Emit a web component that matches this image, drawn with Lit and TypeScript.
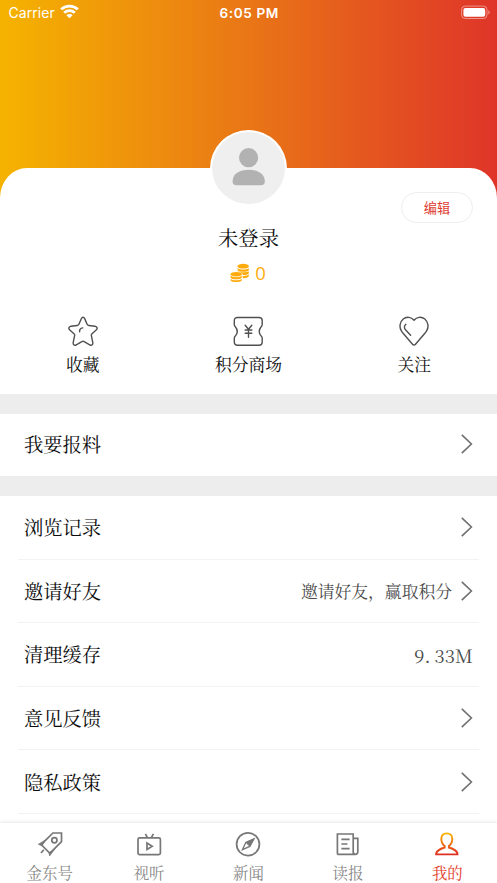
import { LitElement, html, css, svg } from "lit";
import { customElement } from "lit/decorators.js";
import { classMap } from "lit/directives/class-map.js";

const chevron = html`<svg class="chevron" width="12" height="20" viewBox="0 0 12 20"><path d="M.8 .8L10.4 10L.8 19.2" /></svg>`;

const actions = [
  {
    label: "收藏",
    icon: svg`<path d="M15 1.2C15.9 1.2 16.4 2 16.8 2.9L19.1 8.3C19.4 9 20 9.4 20.8 9.5L27 10.2C29.2 10.5 29.9 12.6 28.2 14L24 17.8C23.4 18.3 23.2 18.9 23.4 19.7L24.8 26.6C25.1 28.8 23.5 29.8 21.7 28.8L16.2 25.6C15.4 25.1 14.6 25.1 13.8 25.6L8.3 28.8C6.5 29.8 4.9 28.8 5.2 26.6L6.6 19.7C6.8 18.9 6.6 18.3 6 17.8L1.8 14C.1 12.6 .8 10.5 3 10.2L9.2 9.5C10 9.4 10.6 9 10.9 8.3L13.2 2.9C13.6 2 14.1 1.2 15 1.2Z"/><path d="M11.6 15.8C11.4 13.6 12.7 12.2 14.8 11.9"/>`,
  },
  {
    label: "积分商场",
    icon: svg`<path d="M4.5 1.5H26C28 1.5 29.2 2.7 29.2 4.5V8.6C29.2 9.6 28.8 10.2 28.2 10.8C25.8 13.6 25.8 17.2 28.2 20C28.8 20.6 29.2 21.2 29.2 22.2V26.3C29.2 28.1 28 29.3 26 29.3H4.5C2.5 29.3 1.3 28.1 1.3 26.3V22.2C1.3 21.2 1.7 20.6 2.3 20C4.7 17.2 4.7 13.6 2.3 10.8C1.7 10.2 1.3 9.6 1.3 8.6V4.5C1.3 2.7 2.5 1.5 4.5 1.5Z"/><path d="M12.2 9.2L15.5 13.2L18.8 9.2M15.5 13.2V21.3M12.2 14H18.8M12.2 17.3H18.8"/>`,
  },
  {
    label: "关注",
    icon: svg`<path d="M15 4.3C12.2 .7 7.4 .4 4.2 3C.5 6.1 .1 11.5 2.5 15.2C3 16 3.5 16.6 4.1 17.2L13.5 28.2C14.4 29.3 15.6 29.3 16.5 28.2L25.9 17.2C26.5 16.6 27 16 27.5 15.2C29.9 11.5 29.5 6.1 25.8 3C22.6 .4 17.8 .7 15 4.3Z"/><path d="M6.9 8.3C4.9 10 5 12.3 6.7 14L11.6 19.2"/>`,
  },
];

const rows = [
  { label: "浏览记录", note: "", arrow: true },
  { label: "邀请好友", note: "邀请好友，赢取积分", arrow: true },
  { label: "清理缓存", note: "9.33M", arrow: false },
  { label: "意见反馈", note: "", arrow: true },
  { label: "隐私政策", note: "", arrow: true },
];

const tabs = [
  {
    label: "金东号",
    icon: svg`<path d="M24.5 2H15.9L4.2 13.6L12.9 22.4L24.5 10.6Z"/><circle cx="17.4" cy="9.2" r="2.6"/><path class="solid" d="M8.6 8.9L1.3 13.3L5 14.8ZM12 21.8L12.6 25L18 17.6Z"/><path d="M6.8 18.8L4 22"/>`,
  },
  {
    label: "视听",
    icon: svg`<rect x="2" y="6.8" width="22.4" height="16.8" rx="1.6"/><path d="M9.4 2.8L11.4 6.6M17.4 2.8L15.4 6.6M11 12V18.4L16.2 15.2Z"/>`,
  },
  {
    label: "新闻",
    icon: svg`<circle cx="13" cy="13.2" r="11.4"/><path d="M19 7.8L10.8 11.4L7.4 18.6L14.8 15.4Z" stroke-width="1.3"/><path class="solid" d="M19 7.8L10.8 11.4L14.8 15.4Z"/>`,
  },
  {
    label: "读报",
    icon: svg`<path d="M18.2 23.4H3.6A1.2 1.2 0 0 1 2.4 22.2V3H18.2V21A2.3 2.3 0 0 0 22.8 21V7.4H18.2M20.5 23.4H17M6.4 8.4H14.6M6.4 13H12.4M6.4 17.6H14.6"/>`,
  },
  {
    label: "我的",
    active: true,
    icon: svg`<defs><linearGradient id="warm" x1="0" y1="2" x2="0" y2="24" gradientUnits="userSpaceOnUse"><stop offset="0" stop-color="#f8b500"/><stop offset=".95" stop-color="#e03020"/></linearGradient></defs><path class="warm" d="M12.8 2.4C9.3 2.4 7.3 4.7 7.3 8C7.3 11.2 8.4 13.3 10.7 15V16.5C6.4 17.9 2.1 19.3 2.1 23.4H23.5C23.5 19.3 19.2 17.9 14.9 16.5V15C17.2 13.3 18.3 11.2 18.3 8C18.3 4.7 16.3 2.4 12.8 2.4Z"/>`,
  },
];

@customElement("app-root")
export class AppRoot extends LitElement {
  static styles = css`
    :host {
      display: flex;
      flex-direction: column;
      height: 883px;
      overflow: hidden;
      background: #fff;
      color: #0c0c0c;
      font-family: "Noto Serif CJK SC", "Noto Serif SC", "Source Han Serif SC", "Noto Sans CJK SC", serif;
    }
    * { box-sizing: border-box; }
    svg { display: block; flex: none; fill: none; }
    .hero {
      flex: none;
      height: 393.5px;
      background: linear-gradient(90deg, #f5b300 0%, #e97616 50%, #df3529 100%);
    }
    .status {
      height: 168px;
      display: grid;
      grid-template-columns: 1fr auto 1fr;
      align-items: start;
      padding: 4px 7px 0 8.5px;
      color: #fff;
      font: 14px/18px Inter, sans-serif;
    }
    .carrier { display: flex; gap: 5px; letter-spacing: 0.05px; }
    .clock { font-weight: 600; letter-spacing: 0.6px; font-size: 13.6px; }
    .battery { justify-self: end; margin-top: 1px; }
    .card {
      position: relative;
      height: 225.5px;
      background: #fff;
      border-radius: 27px 27px 0 0 / 30px 30px 0 0;
      display: flex;
      flex-direction: column;
      align-items: center;
    }
    .avatar {
      flex: none;
      width: 77px;
      height: 77px;
      margin-top: -38.5px;
      border-radius: 50%;
      border: 2.5px solid #fff;
      border-bottom-width: 3px;
      background: #efefef;
      display: flex;
      align-items: center;
      justify-content: center;
    }
    .avatar svg { margin-top: -2px; }
    .edit {
      position: absolute;
      right: 24px;
      top: 24px;
      width: 72px;
      height: 31px;
      border: 1.5px solid #eee;
      border-radius: 16px;
      background: #fff;
      color: #e03c31;
      text-align: center;
      font: 13.2px/29px "Noto Sans CJK SC", sans-serif;
    }
    .name { margin-top: 16px; font-size: 20.3px; line-height: 30px; }
    .coins {
      display: flex;
      align-items: center;
      gap: 5px;
      margin-top: 8px;
      margin-bottom: 1px;
      margin-right: 1px;
      height: 24px;
      color: #ffab0d;
      font: 18.5px/24px "Open Sans", sans-serif;
    }
    .actions { display: grid; grid-template-columns: repeat(3, 1fr); width: 100%; margin-top: 30px; }
    .action { display: flex; flex-direction: column; align-items: center; gap: 5px; font-size: 16.8px; line-height: 24px; }
    .action svg { stroke: #505050; stroke-width: 1.4; stroke-linejoin: round; stroke-linecap: round; }
    .band { flex: none; height: 20px; background: #ededed; }
    .row {
      flex: none;
      height: 63.6px;
      margin-left: 18px;
      margin-right: 18px;
      padding: 0 6px 0 6px;
      display: flex;
      align-items: center;
      border-bottom: 1px solid #f3f3f3;
      font-size: 19.3px;
    }
    .row.single { height: 62.5px; padding-bottom: 1px; border-bottom: 0; }
    .note { margin-left: auto; color: #4c4c4c; font-size: 16.8px; padding-top: 1px; }
    .note.value { font-size: 18.4px; letter-spacing: 0.1px; }
    .point { letter-spacing: 4px; }
    .chevron { margin-left: auto; stroke: #707070; stroke-width: 1.6; }
    .note + .chevron { margin-left: 9px; }
    .tabs {
      position: relative;
      flex: none;
      height: 60px;
      margin-top: auto;
      background: #fff;
      box-shadow: 0 -1px 3px rgba(0, 0, 0, 0.1);
      display: grid;
      grid-template-columns: repeat(5, 1fr);
    }
    .tab { display: flex; flex-direction: column; align-items: center; padding-top: 8px; gap: 4px; color: #888; font-size: 15.4px; line-height: 22px; }
    .tab svg { stroke: #777; stroke-width: 1.7; }
    .tab .solid { fill: #777; stroke-width: 0.7; }
    .tab.active { color: #e23a25; }
    .tab .warm { stroke: url(#warm); stroke-width: 1.9; }
  `;

  private note(item: { note: string; arrow: boolean }) {
    if (!item.note) return "";
    if (item.arrow) return html`<span class="note">${item.note}</span>`;
    const [whole, rest] = item.note.split(".");
    return html`<span class="note value">${whole}<span class="point">.</span>${rest}</span>`;
  }

  private row(item: { label: string; note: string; arrow: boolean }, single = false) {
    return html`<div class=${classMap({ row: true, single })}>
      <span>${item.label}</span>
      ${this.note(item)}
      ${item.arrow ? chevron : ""}
    </div>`;
  }

  render() {
    return html`
      <header class="hero">
        <div class="status">
          <div class="carrier">
            <span>Carrier</span>
            <svg width="19" height="15" viewBox="0 0 19 15" stroke="#fff" stroke-width="2.7"><path d="M1.2 5.4C5.8 .9 13.2 .9 17.8 5.4M4.2 8.8C7.1 6 11.9 6 14.8 8.8"/><path d="M9.5 14.2L6.4 11.2C8 9.7 11 9.7 12.6 11.2Z" fill="#fff" stroke="none"/></svg>
          </div>
          <div class="clock">6:05 PM</div>
          <svg class="battery" width="29" height="15" viewBox="0 0 29 15"><rect x=".6" y="1.1" width="25.4" height="12.4" rx="3.6" stroke="#fff" stroke-opacity=".45"/><rect x="2.4" y="2.9" width="21.8" height="8.8" rx="2" fill="#fff"/><path d="M27.4 5.2V9.4C29 8.7 29 5.9 27.4 5.2Z" fill="#fff" fill-opacity=".5"/></svg>
        </div>
        <section class="card">
          <div class="avatar">
            <svg width="34" height="40" viewBox="0 0 34 40"><g fill="#b2b2b2"><circle cx="16.6" cy="10.7" r="9.6"/><path d="M.6 34.5C.6 26.8 7.6 22.8 16.7 22.8S32.8 26.8 32.8 34.5C32.8 37 31.4 38.2 29 38.2H4.4C2 38.2 .6 37 .6 34.5Z"/></g></svg>
          </div>
          <div class="edit">编辑</div>
          <div class="name">未登录</div>
          <div class="coins">
            <svg width="20" height="20" viewBox="0 0 20 20"><g fill="#ffab0d"><ellipse cx="13.2" cy="3.2" rx="5.6" ry="2.4"/><path d="M7.6 5C9.6 7 16.8 7 18.8 5V7.2C17 9.2 9.4 9.2 7.6 7.2Z"/><path d="M7.8 8.3C10.5 9.8 16.8 9.6 18.8 8.3V10.4C17.3 12 14.5 12.2 12.6 12V10.8C11.7 9.8 9.5 9 7.8 8.9Z"/><path d="M12.8 12.9C15 13.1 17.7 12.7 18.8 11.6V13.6C17.5 15.1 15 15.4 12.8 15.2Z"/><ellipse cx="6.2" cy="11.2" rx="5.6" ry="2.3"/><path d="M.6 12.8C2.8 14.7 9.8 14.7 11.8 12.8V14.8C9.8 16.8 2.6 16.8 .6 14.8ZM.6 16C2.8 17.8 9.8 17.8 11.8 16V17.4C9.8 19.6 2.6 19.6 .6 17.4Z"/></g></svg>
            <span>0</span>
          </div>
          <div class="actions">
            ${actions.map((a) => html`<div class="action"><svg width="30" height="31" viewBox="0 0 30 31">${a.icon}</svg><span>${a.label}</span></div>`)}
          </div>
        </section>
      </header>
      <div class="band"></div>
      ${this.row({ label: "我要报料", note: "", arrow: true }, true)}
      <div class="band"></div>
      ${rows.map((r) => this.row(r))}
      <nav class="tabs">
        ${tabs.map((t) => html`<div class=${classMap({ tab: true, active: !!t.active })}><svg width="26" height="26" viewBox="0 0 26 26">${t.icon}</svg><span>${t.label}</span></div>`)}
      </nav>
    `;
  }
}
